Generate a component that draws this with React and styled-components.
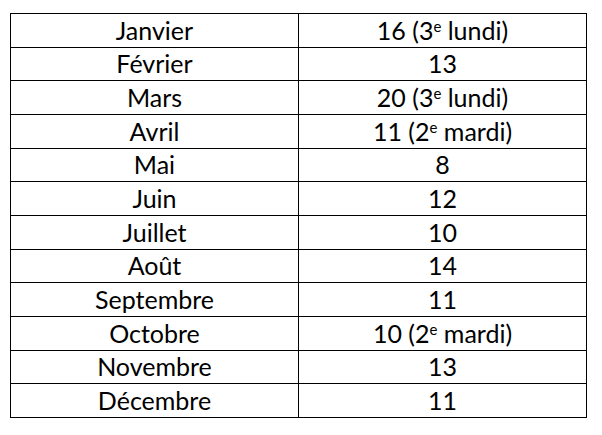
import React from 'react';
import styled, { createGlobalStyle } from 'styled-components';

const GlobalStyle = createGlobalStyle`
  html, body {
    margin: 0;
    padding: 0;
    background: #ffffff;
  }
`;

const Page = styled.div`
  padding: 13px 0 0 10px;
  font-family: Lato, "Open Sans", sans-serif;
  color: #000;
`;

const Table = styled.table`
  border-collapse: collapse;
  width: 577px;
  table-layout: fixed;
`;

const Row = styled.tr`
  height: 33.67px;
`;

const Cell = styled.td`
  border: 1px solid #000;
  padding: 0;
  text-align: center;
  vertical-align: middle;
  font-size: 25px;
  line-height: 1;
  width: 50%;
`;

const Sup = styled.sup`
  font-size: 0.6em;
  vertical-align: 0.55em;
  line-height: 0;
`;

const months = [
  { name: 'Janvier', day: '16', note: ['3', 'lundi'] },
  { name: 'Février', day: '13' },
  { name: 'Mars', day: '20', note: ['3', 'lundi'] },
  { name: 'Avril', day: '11', note: ['2', 'mardi'] },
  { name: 'Mai', day: '8' },
  { name: 'Juin', day: '12' },
  { name: 'Juillet', day: '10' },
  { name: 'Août', day: '14' },
  { name: 'Septembre', day: '11' },
  { name: 'Octobre', day: '10', note: ['2', 'mardi'] },
  { name: 'Novembre', day: '13' },
  { name: 'Décembre', day: '11' }
];

function App() {
  return (
    <Page>
      <GlobalStyle />
      <Table>
        <tbody>
          {months.map(m => (
            <Row key={m.name}>
              <Cell>{m.name}</Cell>
              <Cell>
                {m.day}
                {m.note && (
                  <> ({m.note[0]}<Sup>e</Sup> {m.note[1]})</>
                )}
              </Cell>
            </Row>
          ))}
        </tbody>
      </Table>
    </Page>
  );
}

export default App;
